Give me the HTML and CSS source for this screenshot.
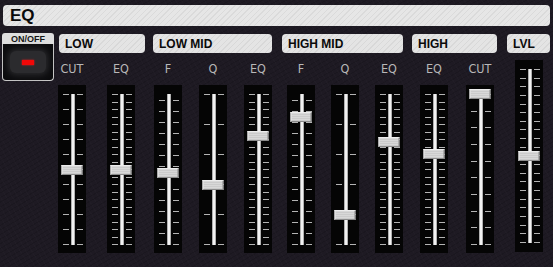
FILE: index.html
```html
<!DOCTYPE html>
<html lang="en">
<head>
<meta charset="UTF-8">
<meta name="viewport" content="width=device-width, initial-scale=1.0">
<title>EQ</title>
<link rel="stylesheet" href="styles.css">
</head>
<body>
<div class="panel">
  <div class="title-bar">EQ</div>

  <div class="main">
    <div class="power">
      <div class="power-label">ON/OFF</div>
      <div class="power-button">
        <div class="power-glow"><div class="power-led"></div></div>
      </div>
    </div>

    <div class="section section-low">
      <div class="section-label">LOW</div>
      <div class="channels">
        <div class="channel"><div class="channel-label">CUT</div><div class="track" data-ticks="11" data-value="50"></div></div>
        <div class="channel"><div class="channel-label">EQ</div><div class="track" data-ticks="21" data-value="50"></div></div>
      </div>
    </div>

    <div class="section section-lowmid">
      <div class="section-label">LOW MID</div>
      <div class="channels">
        <div class="channel"><div class="channel-label">F</div><div class="track" data-ticks="14" data-offset="6" data-value="52"></div></div>
        <div class="channel"><div class="channel-label">Q</div><div class="track" data-ticks="6" data-value="60"></div></div>
        <div class="channel"><div class="channel-label">EQ</div><div class="track" data-ticks="21" data-value="28"></div></div>
      </div>
    </div>

    <div class="section section-highmid">
      <div class="section-label">HIGH MID</div>
      <div class="channels">
        <div class="channel"><div class="channel-label">F</div><div class="track" data-ticks="14" data-offset="6" data-value="15"></div></div>
        <div class="channel"><div class="channel-label">Q</div><div class="track" data-ticks="6" data-value="80"></div></div>
        <div class="channel"><div class="channel-label">EQ</div><div class="track" data-ticks="21" data-value="32"></div></div>
      </div>
    </div>

    <div class="section section-high">
      <div class="section-label">HIGH</div>
      <div class="channels">
        <div class="channel"><div class="channel-label">EQ</div><div class="track" data-ticks="21" data-value="40"></div></div>
        <div class="channel"><div class="channel-label">CUT</div><div class="track" data-ticks="10" data-value="0"></div></div>
      </div>
    </div>

    <div class="section section-lvl">
      <div class="section-label">LVL</div>
      <div class="channels">
        <div class="channel"><div class="track track-tall" data-ticks="21" data-value="50"></div></div>
      </div>
    </div>
  </div>
</div>

<script>
  function tickColumn(count, offset) {
    const col = document.createElement('div');
    col.className = 'ticks';
    if (offset) col.style.marginTop = offset + 'px';
    for (let i = 0; i < count; i++) {
      const tick = document.createElement('div');
      tick.className = 'tick';
      col.appendChild(tick);
    }
    return col;
  }

  function render() {
    document.querySelectorAll('.track').forEach(track => {
      const count = Number(track.dataset.ticks);
      const offset = Number(track.dataset.offset || 0);
      const scale = document.createElement('div');
      scale.className = 'scale';
      scale.appendChild(tickColumn(count, offset));
      const rail = document.createElement('div');
      rail.className = 'rail';
      scale.appendChild(rail);
      scale.appendChild(tickColumn(count, offset));
      const thumb = document.createElement('div');
      thumb.className = 'thumb';
      thumb.style.top = track.dataset.value + '%';
      scale.appendChild(thumb);
      track.appendChild(scale);
    });
  }

  render();
</script>
</body>
</html>
```

FILE: styles.css
```css
body {
  margin: 0;
  width: 553px;
  height: 267px;
  overflow: hidden;
  background-color: #1e1a23;
  background-image:
    repeating-linear-gradient(60deg, rgba(255,255,255,0.012) 0 1px, transparent 1px 5px),
    repeating-linear-gradient(-30deg, rgba(0,0,0,0.12) 0 1px, transparent 1px 4px);
  font-family: "Liberation Sans", Arial, sans-serif;
}
.panel {
  padding: 5px 3px 0 2px;
}
.title-bar {
  margin-left: 1px;
  height: 21px;
  line-height: 22px;
  padding-left: 7px;
  border-radius: 4px;
  background-color: #e6e6e6;
  background-image: repeating-linear-gradient(135deg, rgba(0,0,0,0.05) 0 1px, transparent 1px 4px);
  font-weight: bold;
  font-size: 17px;
  color: #0a0a0a;
}
.main {
  display: flex;
  align-items: flex-start;
  margin-top: 7px;
}

/* on / off switch */
.power {
  width: 52px;
  height: 48px;
  display: flex;
  flex-direction: column;
}
.power-label {
  height: 11px;
  line-height: 12px;
  background: #dedede;
  border-radius: 3px 3px 0 0;
  text-align: center;
  font-weight: bold;
  font-size: 9px;
  color: #151515;
}
.power-button {
  flex: 1;
  display: flex;
  align-items: center;
  justify-content: center;
  border: 1px solid #c8c8c8;
  border-top: none;
  border-radius: 0 0 4px 4px;
  background: #0c0c0e;
}
.power-glow {
  width: 36px;
  height: 22px;
  display: flex;
  align-items: center;
  justify-content: center;
  border-radius: 6px;
  background: #2b2b2e;
  box-shadow: 0 0 6px 2px #2b2b2e;
}
.power-led {
  width: 12px;
  height: 5px;
  background: #f00808;
  box-shadow: 0 0 2px #ff2020;
}

/* sections */
.section {
  display: flex;
  flex-direction: column;
}
.section-label {
  margin-top: 1px;
  height: 19px;
  line-height: 20px;
  padding-left: 6px;
  border-radius: 4px;
  background-color: #e4e4e4;
  background-image: repeating-linear-gradient(135deg, rgba(0,0,0,0.05) 0 1px, transparent 1px 4px);
  font-weight: bold;
  font-size: 12px;
  color: #0a0a0a;
}
.channels {
  display: flex;
}
.section-low { margin-left: 5px; width: 86px; }
.section-low .channels { margin-left: -1px; gap: 21px; }
.section-lowmid { margin-left: 8px; width: 119px; }
.section-lowmid .channels { justify-content: flex-end; gap: 17px; }
.section-highmid { margin-left: 10px; width: 121px; }
.section-highmid .channels { justify-content: flex-end; gap: 16px; }
.section-high { margin-left: 9px; width: 85px; }
.section-high .channels { padding-left: 8px; gap: 18px; }
.section-lvl { margin-left: 10px; width: 43px; }
.section-lvl .channels { justify-content: center; padding-left: 1px; }

/* faders */
.channel {
  width: 28px;
  display: flex;
  flex-direction: column;
  align-items: center;
}
.channel-label {
  height: 24px;
  padding-top: 8px;
  line-height: 16px;
  font-family: "DejaVu Sans", sans-serif;
  font-stretch: condensed;
  font-size: 12.5px;
  color: #b8b8b8;
}
.track {
  box-sizing: border-box;
  width: 28px;
  height: 168px;
  padding: 9px 0 8px;
  background: #050505;
}
.track-tall {
  margin-top: 7px;
  height: 192px;
  padding: 9px 0 9px;
}
.scale {
  position: relative;
  height: 100%;
  display: flex;
  justify-content: center;
  gap: 2px;
  padding-left: 1px;
}
.ticks {
  width: 6px;
  display: flex;
  flex-direction: column;
  justify-content: space-between;
}
.tick {
  height: 1px;
  background: #b4b4b4;
}
.rail {
  width: 4px;
  background: linear-gradient(to right, #8c8c8c, #f2f2f2 35%, #f2f2f2 65%, #8c8c8c);
}
.thumb {
  position: absolute;
  left: 50%;
  width: 21px;
  height: 10px;
  box-sizing: border-box;
  transform: translate(-50%, -50%);
  border: 1px solid #ededed;
  border-right-color: #8a8a8a;
  border-bottom-color: #8a8a8a;
  background-color: #cbcbcb;
  background-image: repeating-linear-gradient(to bottom, rgba(255,255,255,0.25) 0 1px, transparent 1px 2px);
}
```
